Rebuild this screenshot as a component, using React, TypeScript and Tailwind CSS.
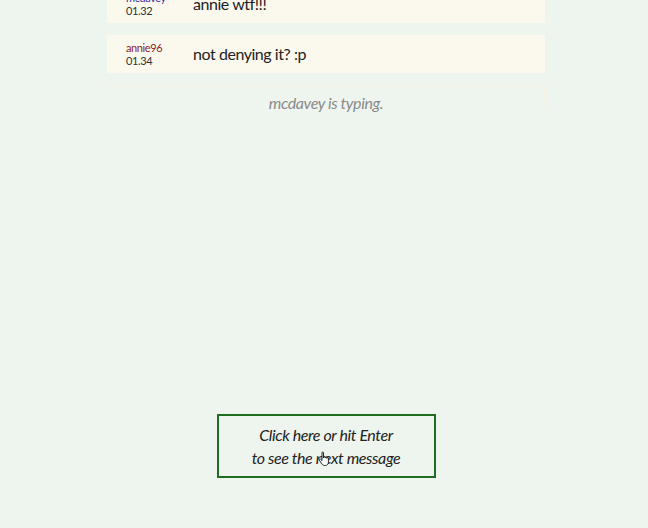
import React from 'react';

const messages = [
  { id: 1, user: 'mcdavey', time: '01.32', text: 'annie wtf!!!', color: 'text-[#3b2fa3]' },
  { id: 2, user: 'annie96', time: '01.34', text: 'not denying it? :p', color: 'text-[#8e1b1b]' },
];

export default function App() {
  return (
    <div
      className="h-[528px] w-[648px] overflow-hidden bg-[#eef5ee]"
      style={{ fontFamily: 'Lato, "Open Sans", sans-serif' }}
    >
      <div className="ml-[107px] flex h-full w-[438px] flex-col">
        <div className="-mt-[15px] flex flex-col gap-[12px]">
          {messages.map((m) => (
            <div key={m.id} className="flex h-[38px] items-center bg-[#fbf9ee]">
              <div className="flex w-[86px] flex-col pl-[19px] text-[11px] leading-[13px] tracking-[-0.4px]">
                <span className={m.color}>{m.user}</span>
                <span className="text-[#333]">{m.time}</span>
              </div>
              <p className="text-[16px] tracking-[-0.45px] text-[#222]">{m.text}</p>
            </div>
          ))}
        </div>

        <div className="mt-[13px] flex h-[34px] items-center justify-center border-x border-t border-[#f8f3dc] [mask-image:linear-gradient(to_bottom,black,transparent)]" />
        <div className="-mt-[34px] flex h-[34px] items-center justify-center">
          <p className="text-[16px] italic tracking-[-0.4px] text-[#8a8a8a]">mcdavey is typing.</p>
        </div>

        <div className="mt-[294px] flex justify-center">
          <button className="relative h-[64px] w-[219px] border-2 border-[#1f6e1f] text-[16px] italic leading-[23px] tracking-[-0.4px] text-[#222]">
            Click here or hit Enter
            <br />
            to see the next message
            <svg
              className="absolute left-[99px] top-[35px]"
              width="14"
              height="16"
              viewBox="0 0 14 16"
            >
              <path
                d="M4 1.5c0-.8 1.5-.8 1.5 0V7l.3-1c0-.8 1.4-.8 1.4 0v1l.2-.6c0-.8 1.4-.8 1.4 0v1l.2-.4c0-.8 1.4-.8 1.4 0V11c0 2-1.2 3.5-3 3.5H6.5C5 14.5 4.3 13.6 3.6 12.5L1.2 9c-.5-.8.5-1.6 1.2-.9L4 9.6z"
                fill="#fff"
                stroke="#111"
                strokeWidth="0.9"
                strokeLinejoin="round"
              />
            </svg>
          </button>
        </div>
      </div>
    </div>
  );
}
